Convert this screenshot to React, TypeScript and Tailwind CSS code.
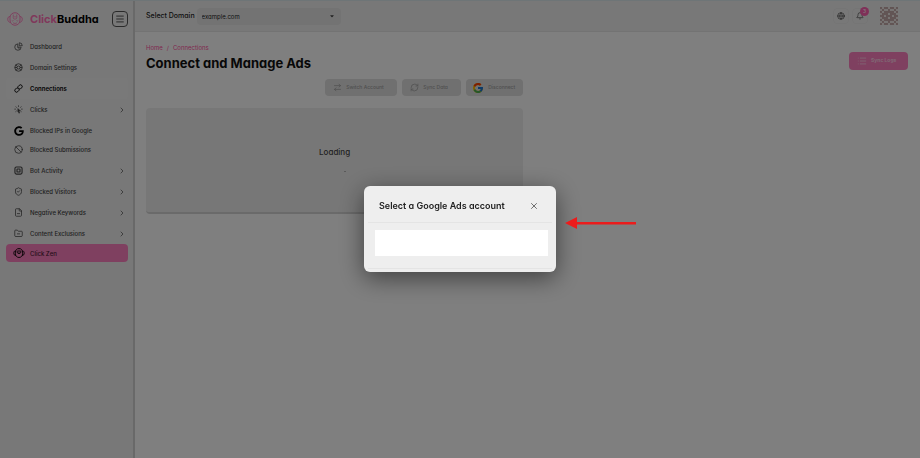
import React from 'react';
import {
  ArrowRightLeft,
  Ban,
  Bell,
  ChevronRight,
  FileMinus,
  FolderMinus,
  Globe,
  List,
  Menu,
  RefreshCw,
  ShieldCheck,
  X,
} from 'lucide-react';
import { FaCaretDown, FaGoogle } from 'react-icons/fa';
import { FcGoogle } from 'react-icons/fc';

function BuddhaIcon({ className }: { className?: string }) {
  return (
    <svg viewBox="0 0 32 28" fill="none" stroke="currentColor" strokeWidth="2" className={className}>
      <path d="M6 10C7 4.500 11 1.500 16 1.500S25 4.500 26 10v6c0 6-4 10.500-10 10.500S6 22 6 16z" />
      <path d="M6 9c-3 0-4.500 2-4.500 5.500S3.500 20.500 7 21M26 9c3 0 4.500 2 4.500 5.500s-2 6-5.500 6.500" />
      <path d="M12.500 5v6.500c0 1.500 1 2.500 2.500 2.500h2c1.500 0 2.500-1 2.500-2.500V5M16 8v3M9.500 17c1 1.200 2.500 1.200 3.500 0M19 17c1 1.200 2.500 1.200 3.500 0M12 21.500c2.500 1.800 5.500 1.800 8 0" strokeWidth="1.600" />
    </svg>
  );
}

function ZenIcon({ className }: { className?: string }) {
  return (
    <svg viewBox="0 0 32 28" fill="none" stroke="currentColor" strokeWidth="2.500" className={className}>
      <path d="M16 1.500c-6 0-10 4-10 10V16c0 6 4 10.500 10 10.500S26 22 26 16v-4.500c0-6-4-10-10-10z" />
      <path d="M6 8c-3 0-4.500 3-4.500 6.500S3.500 21 7 21.500M26 8c3 0 4.500 3 4.500 6.500s-2 6.500-5.500 7" />
      <path d="M11 7v6l5 3 5-3V7M16 5v8" />
    </svg>
  );
}

function PieIcon({ className }: { className?: string }) {
  return (
    <svg viewBox="0 0 24 24" fill="none" stroke="currentColor" strokeWidth="2" className={className}>
      <path d="M10 5a8.500 8.500 0 1 0 9 9h-9z" />
      <path d="M14 2v8h8a8 8 0 0 0-8-8zM10 14l6 6" />
    </svg>
  );
}

function DomainIcon({ className }: { className?: string }) {
  return (
    <svg viewBox="0 0 24 24" fill="none" stroke="currentColor" strokeWidth="2.200" className={className}>
      <circle cx="12" cy="12" r="10" />
      <circle cx="12" cy="12" r="4" />
      <path d="M5 5.500l4 3.500M15 9l4-3.500M8 12H2.500M16 12h5.500M9 15l-3 4M15 15l3 4" />
    </svg>
  );
}

function ChainIcon({ className }: { className?: string }) {
  return (
    <svg viewBox="0 0 24 24" fill="none" stroke="currentColor" strokeWidth="2.500" strokeLinecap="round" className={className}>
      <g transform="rotate(-45 12 12)">
        <path d="M9 7.500H4.500a4.500 4.500 0 0 0 0 9H9a4.500 4.500 0 0 0 4.500-4.500" />
        <path d="M15 16.500h4.500a4.500 4.500 0 0 0 0-9H15a4.500 4.500 0 0 0-4.500 4.500" />
      </g>
    </svg>
  );
}

function ClickIcon({ className }: { className?: string }) {
  return (
    <svg viewBox="0 0 24 24" fill="none" stroke="currentColor" strokeWidth="2" className={className}>
      <path d="M12 1v4M4.500 4l2.500 3M19.500 4L17 7M1 11h4M19 11h4M4 18l3-2.500M20 18l-3-2.500" />
      <path d="M10 9l7 6-3.500 1 2 5-2.500 1-2-5-1 1z" fill="currentColor" strokeWidth="1" />
    </svg>
  );
}

function ChipIcon({ className }: { className?: string }) {
  return (
    <svg viewBox="0 0 24 24" fill="none" stroke="currentColor" strokeWidth="3" className={className}>
      <rect x="2.500" y="2.500" width="19" height="19" rx="4" />
      <rect x="8" y="8" width="8" height="8" rx="1" />
    </svg>
  );
}

const avatarRows = [
  '101101101',
  '010010010',
  '101111101',
  '011101110',
  '110111011',
  '011101110',
  '101111101',
  '010010010',
  '101101101',
];

function Avatar() {
  return (
    <svg viewBox="0 0 18 18" className="size-[18px] bg-[#efe8e6] text-[#b08c8c]" role="img" aria-label="Profile">
      {avatarRows.map((row, y) =>
        row.split('').map((cell, x) =>
          cell === '1' ? <circle key={`${x}-${y}`} cx={x * 2 + 1} cy={y * 2 + 1} r="0.9" fill="currentColor" /> : null
        )
      )}
    </svg>
  );
}

const items = [
  { label: 'Dashboard', icon: PieIcon },
  { label: 'Domain Settings', icon: DomainIcon },
  { label: 'Connections', icon: ChainIcon, active: true },
  { label: 'Clicks', icon: ClickIcon, more: true },
  { label: 'Blocked IPs in Google', icon: FaGoogle, dark: true },
  { label: 'Blocked Submissions', icon: Ban, short: true },
  { label: 'Bot Activity', icon: ChipIcon, more: true },
  { label: 'Blocked Visitors', icon: ShieldCheck, more: true },
  { label: 'Negative Keywords', icon: FileMinus, more: true },
  { label: 'Content Exclusions', icon: FolderMinus, more: true },
];

function Sidebar() {
  return (
    <aside className="w-[135px] shrink-0 border-r-2 border-[#d2d2d2] bg-[#f1f1f1] pt-2.5 pr-[5px] pl-1.5">
      <div className="flex items-center">
        <BuddhaIcon className="ml-px h-3.5 w-4 text-[#ff80be]" />
        <span className="ml-[7px] text-[11px] leading-4 font-bold text-black">
          <span className="text-[#ff70b6]">Click</span>Buddha
        </span>
        <button aria-label="Toggle menu" className="ml-auto flex size-4 items-center justify-center rounded-sm border border-[#555]">
          <Menu className="size-2.5 text-[#333]" />
        </button>
      </div>
      <nav className="mt-[9px] flex flex-col text-[6px] font-medium text-[#444]">
        {items.map(({ label, icon: Icon, active, more, dark, short }) => (
          <a
            key={label}
            href="#"
            className={`flex items-center pr-0.5 pl-2 ${short ? 'mb-0.5 h-[17px]' : 'h-[21px]'} ${active ? 'rounded-sm bg-[#f3f3f3] font-semibold text-black' : ''}`}
          >
            <span className="flex w-[9px] justify-center">
              <Icon className={`shrink-0 ${dark ? 'size-2.5 text-black' : 'size-[9px]'}`} />
            </span>
            <span className="ml-[7px]">{label}</span>
            {more && <ChevronRight className="ml-auto size-2" />}
          </a>
        ))}
        <a href="#" className="flex h-[18px] items-center rounded-sm bg-[#ff80c0] pl-[7px] text-[#4a1a34]">
          <ZenIcon className="h-2.5 w-3 text-black" />
          <span className="ml-[5px]">Click Zen</span>
        </a>
      </nav>
    </aside>
  );
}

function Header() {
  return (
    <header className="flex h-[31px] items-center border-b border-[#e6e6e6] bg-[#f1f1f1] px-[11px]">
      <label htmlFor="domain" className="text-[7px] font-medium text-[#222]">Select Domain</label>
      <div className="relative ml-0.5 flex w-36 items-center">
        <select id="domain" className="h-[17px] w-full appearance-none rounded-sm bg-[#e6e6e6] px-[5px] text-[6px] text-[#222]">
          <option>example.com</option>
        </select>
        <FaCaretDown className="pointer-events-none absolute right-1.5 size-1.5 text-[#444]" />
      </div>
      <button aria-label="Language" className="ml-auto flex size-4 items-center justify-center rounded-sm border border-[#ebebeb] text-[#444]">
        <Globe className="size-2" />
      </button>
      <button aria-label="Notifications" className="relative ml-[3px] flex size-4 items-center justify-center rounded-sm border border-[#ebebeb] text-[#444]">
        <Bell className="size-2" />
        <span className="absolute -top-[2px] -right-[2px] flex size-[9px] items-center justify-center rounded-full bg-[#ff60b0] text-[5px] text-white">3</span>
      </button>
      <div className="mr-[11px] ml-3"><Avatar /></div>
    </header>
  );
}

function Modal() {
  return (
    <div className="fixed inset-0 flex items-center justify-center bg-black/50">
      <div
        role="dialog"
        aria-labelledby="modal-title"
        className="relative w-48 rounded-md bg-[#eee] px-1 shadow-[0_6px_24px_rgba(0,0,0,0.5)]"
      >
        <div className="flex h-[37px] items-center justify-between border-b border-[#e4e4e4] pt-1 pr-[13px] pl-[11px]">
          <h2 id="modal-title" className="text-[9px] leading-3 font-semibold text-[#222]">Select a Google Ads account</h2>
          <button aria-label="Close" className="text-[#555]"><X className="size-2.5" /></button>
        </div>
        <div className="border-b border-[#e4e4e4] pt-[7px] pr-1 pb-3 pl-[7px]">
          <div className="h-[26px] bg-white" />
        </div>
        <div className="h-[3px]" />
        <svg viewBox="0 0 72 12" className="absolute top-[31px] left-[201px] h-3 w-[72px]" aria-hidden="true">
          <path d="M0 6L12 0v5h59v2.500H12V12z" fill="#eb1c1c" />
        </svg>
      </div>
    </div>
  );
}

const actionClass = 'flex h-[17px] items-center rounded-sm bg-[#e0e0e0] text-[5px] font-medium text-[#a0a0a0]';

export default function App() {
  return (
    <div className="flex min-h-screen border-t border-[#dcebee] bg-white font-['Inter',sans-serif] text-[#222] [font-feature-settings:'cv11']">
      <Sidebar />
      <div className="min-w-0 flex-1">
        <Header />
        <main className="pt-3 pr-3 pl-[11px]">
          <div className="flex items-start justify-between">
            <div>
              <nav aria-label="Breadcrumb" className="flex gap-1 text-[6px] leading-2 text-[#ff50a0]">
                <a href="#">Home</a>
                <span>/</span>
                <a href="#">Connections</a>
              </nav>
              <h1 className="mt-[3px] text-[13px] leading-4 font-bold text-[#111]">Connect and Manage Ads</h1>
            </div>
            <button className="mt-2 flex h-[18px] w-[59px] items-center gap-1 rounded-sm bg-[#ff80c0] pl-2 text-[5px] font-bold text-[#ffd0e8]">
              <List className="size-2.5" />
              Sync Logs
            </button>
          </div>
          <div className="w-[49.5%]">
            <div className="mt-2 flex justify-end gap-[5px]">
              <button className={`${actionClass} w-[72px] gap-1 pl-2`}>
                <ArrowRightLeft className="size-[9px]" />
                Switch Account
              </button>
              <button className={`${actionClass} w-[59px] gap-1 pl-2`}>
                <RefreshCw className="size-[9px]" />
                Sync Data
              </button>
              <button className={`${actionClass} w-[57px] gap-1 pl-1.5`}>
                <FcGoogle className="size-3" />
                Disconnect
              </button>
            </div>
            <section className="mt-3 flex h-[106px] flex-col items-center rounded-sm border-b-2 border-[#d4d4d4] bg-[#efefef] pt-10">
              <p className="text-[8px] leading-2 font-medium text-[#444]">Loading</p>
              <span className="mt-[15px] ml-5 h-px w-0.5 bg-[#b5b5b5]" />
            </section>
          </div>
        </main>
      </div>
      <Modal />
    </div>
  );
}
